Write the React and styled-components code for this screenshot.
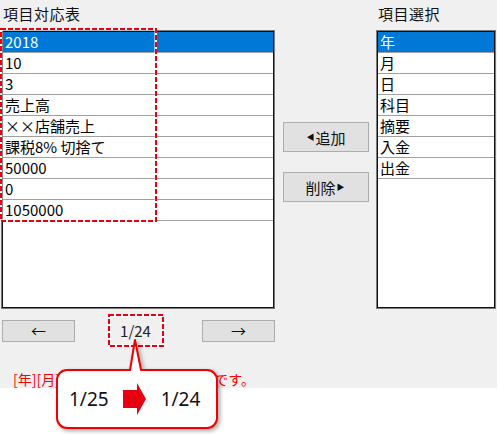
import React from "react";
import styled, { createGlobalStyle } from "styled-components";

const GlobalStyle = createGlobalStyle`
  html, body {
    margin: 0;
    padding: 0;
    background: #ffffff;
  }
  body {
    font-family: "Noto Sans CJK JP", "Noto Sans", sans-serif;
    color: #000;
  }
`;

const mapped = ["2018", "10", "3", "売上高", "××店舗売上", "課税8% 切捨て", "50000", "0", "1050000"];
const fields = ["年", "月", "日", "科目", "摘要", "入金", "出金"];

function Dashed({ width, height }) {
  return (
    <svg width={width} height={height} style={{ display: "block" }}>
      <rect x="1" y="1" width={width - 2} height={height - 2} fill="none" stroke="#fff" strokeWidth="3" />
      <rect
        x="1"
        y="1"
        width={width - 2}
        height={height - 2}
        fill="none"
        stroke="#e60012"
        strokeWidth="2"
        strokeDasharray="5 2"
      />
    </svg>
  );
}

function App() {
  return (
    <>
      <GlobalStyle />
      <Page>
        <Window>
          <Title>項目対応表</Title>
          <span />
          <Title>項目選択</Title>

          <ListFrame>
            <ListBody>
              {mapped.map((v, i) => (
                <Row key={i} $selected={i === 0}>{v}</Row>
              ))}
            </ListBody>
            <Annotation>
              <Dashed width={157} height={194} />
            </Annotation>
          </ListFrame>

          <ButtonColumn>
            <Button>
              <Tri>◀</Tri>追加
            </Button>
            <Button>
              削除<Tri>▶</Tri>
            </Button>
          </ButtonColumn>

          <ListFrame>
            <ListBody>
              {fields.map((v, i) => (
                <Row key={i} $selected={i === 0}>{v}</Row>
              ))}
            </ListBody>
          </ListFrame>

          <Pager>
            <PageButton>←</PageButton>
            <PageLabel>
              <LabelBox>
                <Dashed width={56} height={33} />
              </LabelBox>
              1/24
            </PageLabel>
            <PageButton>→</PageButton>
          </Pager>

          <Message>[年][月][日]と[科目][入金]は必須です。</Message>
        </Window>

        <Callout>
          <Bubble width="162" height="92" viewBox="0 0 162 92">
            <path
              d="M11 32 H74 L79 2 L85 32 H151 A10 10 0 0 1 161 42 V80 A10 10 0 0 1 151 90 H11 A10 10 0 0 1 1 80 V42 A10 10 0 0 1 11 32 Z"
              fill="#fff"
              stroke="#f00000"
              strokeWidth="2"
              strokeLinejoin="round"
            />
          </Bubble>
          <CalloutBody>
            <CalloutText>1/25</CalloutText>
            <svg width="24" height="32" viewBox="0 0 24 32">
              <path d="M0 7 H14 V0 L23 16 L14 32 V25 H0 Z" fill="#e60012" />
            </svg>
            <CalloutText>1/24</CalloutText>
          </CalloutBody>
        </Callout>
      </Page>
    </>
  );
}

const Page = styled.div`
  position: relative;
  width: 499px;
  height: 434px;
  overflow: hidden;
`;

const Window = styled.div`
  width: 497px;
  height: 388px;
  box-sizing: border-box;
  padding: 0 1px;
  background: #f0f0f0;
  display: grid;
  grid-template-columns: 274px 101px 120px;
  grid-template-rows: 30px 279px 63px 16px;
`;

const Title = styled.div`
  font-size: 15px;
  line-height: 20px;
  padding: 4px 0 0 2px;
  letter-spacing: 0.5px;
  color: #111;
`;

const ListFrame = styled.div`
  position: relative;
  border: 1px solid #7a7a7a;
  background: #fff;
`;

const ListBody = styled.div`
  height: 100%;
  box-sizing: border-box;
  border: 1px solid #111;
  background: #fff;
  display: flex;
  flex-direction: column;
`;

const Row = styled.div`
  height: 20px;
  line-height: 20px;
  flex: none;
  border-bottom: 1px solid #a0a0a0;
  padding-left: 2px;
  font-size: 15px;
  white-space: nowrap;
  color: ${(p) => (p.$selected ? "#fff" : "#000")};
  background: ${(p) => (p.$selected ? "#0078d7" : "#fff")};
`;

const Annotation = styled.div`
  position: absolute;
  left: -2px;
  top: -3px;
`;

const ButtonColumn = styled.div`
  display: flex;
  flex-direction: column;
  align-items: center;
  gap: 20px;
  padding-top: 92px;
`;

const Button = styled.div`
  width: 86px;
  height: 30px;
  box-sizing: border-box;
  background: #e1e1e1;
  border: 1px solid #adadad;
  display: flex;
  align-items: center;
  justify-content: center;
  font-size: 15px;
  color: #111;
`;

const Tri = styled.span`
  font-size: 8px;
  line-height: 1;
  margin: 0 1px;
`;

const Pager = styled.div`
  grid-column: 1;
  display: flex;
  align-items: center;
  justify-content: space-between;
  padding: 5px 0 0 1px;
  align-self: start;
`;

const PageButton = styled.div`
  width: 73px;
  height: 22px;
  box-sizing: border-box;
  background: #e1e1e1;
  border: 1px solid #adadad;
  display: flex;
  align-items: center;
  justify-content: center;
  font-size: 15px;
  color: #111;
`;

const PageLabel = styled.div`
  position: relative;
  width: 56px;
  height: 33px;
  margin-right: 6px;
  display: flex;
  align-items: center;
  justify-content: center;
  font-size: 15px;
  color: #222;
`;

const LabelBox = styled.div`
  position: absolute;
  inset: 0;
`;

const Message = styled.div`
  grid-column: 1 / -1;
  padding: 0 0 0 12px;
  font-size: 14px;
  line-height: 14px;
  white-space: nowrap;
  color: #ff0000;
`;

const Callout = styled.div`
  position: absolute;
  left: 56px;
  top: 338px;
  width: 162px;
  height: 92px;
  display: flex;
  flex-direction: column;
  justify-content: flex-end;
`;

const Bubble = styled.svg`
  position: absolute;
  left: 0;
  top: 0;
  overflow: visible;
  filter: drop-shadow(2px 2px 2px rgba(0, 0, 0, 0.35));
`;

const CalloutBody = styled.div`
  position: relative;
  height: 58px;
  margin-bottom: 2px;
  display: flex;
  align-items: center;
  padding-left: 13px;
  gap: 14px;
`;

const CalloutText = styled.span`
  font-size: 19px;
  color: #111;
  font-family: "Noto Sans", "Noto Sans CJK JP", sans-serif;
`;

export default App;
